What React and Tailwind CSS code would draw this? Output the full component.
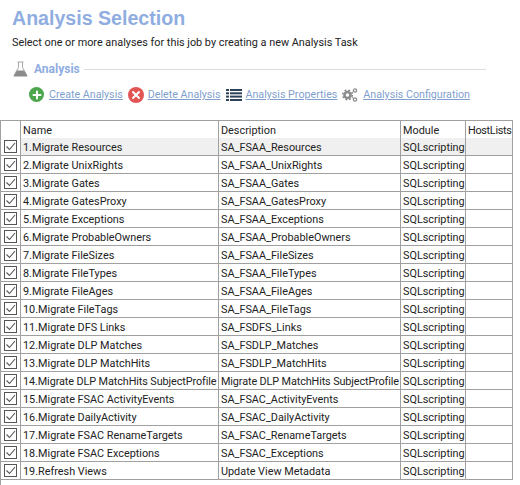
import { Plus, X } from "lucide-react";

const rows = [
  ["1.Migrate Resources", "SA_FSAA_Resources"],
  ["2.Migrate UnixRights", "SA_FSAA_UnixRights"],
  ["3.Migrate Gates", "SA_FSAA_Gates"],
  ["4.Migrate GatesProxy", "SA_FSAA_GatesProxy"],
  ["5.Migrate Exceptions", "SA_FSAA_Exceptions"],
  ["6.Migrate ProbableOwners", "SA_FSAA_ProbableOwners"],
  ["7.Migrate FileSizes", "SA_FSAA_FileSizes"],
  ["8.Migrate FileTypes", "SA_FSAA_FileTypes"],
  ["9.Migrate FileAges", "SA_FSAA_FileAges"],
  ["10.Migrate FileTags", "SA_FSAA_FileTags"],
  ["11.Migrate DFS Links", "SA_FSDFS_Links"],
  ["12.Migrate DLP Matches", "SA_FSDLP_Matches"],
  ["13.Migrate DLP MatchHits", "SA_FSDLP_MatchHits"],
  ["14.Migrate DLP MatchHits SubjectProfile", "Migrate DLP MatchHits SubjectProfile"],
  ["15.Migrate FSAC ActivityEvents", "SA_FSAC_ActivityEvents"],
  ["16.Migrate DailyActivity", "SA_FSAC_DailyActivity"],
  ["17.Migrate FSAC RenameTargets", "SA_FSAC_RenameTargets"],
  ["18.Migrate FSAC Exceptions", "SA_FSAC_Exceptions"],
  ["19.Refresh Views", "Update View Metadata"],
];

const cols = "grid grid-cols-[20px_198px_182px_65px_47px]";
const cell = "border-r border-[#a0a0a0] pl-[2px] pt-px h-full overflow-hidden whitespace-nowrap";

function Flask() {
  return (
    <svg width="15" height="16" viewBox="0 0 15 16">
      <path d="M4.5 1h6M5.5 1v5.5L1 14.5h13L9.5 6.5V1" fill="none" stroke="#a8a8a8" />
      <path d="M4 9.5h7l3.5 6H.5z" fill="#8c8c8c" />
    </svg>
  );
}

function Gears() {
  return (
    <svg width="16" height="16" viewBox="0 0 16 16" fill="none" stroke="#8c8c8c">
      <circle cx="5.5" cy="8" r="3" strokeWidth="2.6" />
      <circle cx="5.5" cy="8" r="4.8" strokeWidth="1.5" strokeDasharray="1.9 1.9" />
      <circle cx="13" cy="3.5" r="1.6" strokeWidth="1.3" />
      <circle cx="13" cy="12.5" r="1.6" strokeWidth="1.3" />
      <path d="M9.5 6 11.5 4.5M9.5 10 11.5 11.5" strokeWidth="1" />
    </svg>
  );
}

function ListIcon() {
  return (
    <svg width="16" height="12" viewBox="0 0 16 12" fill="#2f4159">
      <rect x="0" y="0" width="3" height="2" />
      <rect x="4" y="0" width="12" height="2" />
      <rect x="0" y="3.3" width="3" height="2" />
      <rect x="4" y="3.3" width="12" height="2" />
      <rect x="0" y="6.6" width="3" height="2" />
      <rect x="4" y="6.6" width="12" height="2" />
      <rect x="0" y="10" width="3" height="2" />
      <rect x="4" y="10" width="12" height="2" />
    </svg>
  );
}

function Check() {
  return (
    <div className="w-[13px] h-[13px] border border-[#555] bg-white flex items-center justify-center">
      <svg width="11" height="11" viewBox="0 0 11 11" fill="none" stroke="#555" strokeWidth="1.1">
        <path d="M1.5 5.5 4.5 8.5 10 2" />
      </svg>
    </div>
  );
}

function Action({ icon, label, className }) {
  return (
    <div className={"flex items-center gap-[4px] " + className}>
      {icon}
      <a className="underline text-[#7f9fce]">{label}</a>
    </div>
  );
}

export default function App() {
  return (
    <div className="w-[520px] h-[485px] bg-white overflow-hidden font-['Roboto',sans-serif] text-[10.85px] text-[#222]">
      <h1 className="pl-3 pt-[5px] h-[35px] font-['Liberation_Sans',sans-serif] text-[19.6px] leading-[26px] font-bold text-[#8fade0]">Analysis Selection</h1>
      <p className="pl-3 h-[24px] leading-[16px]">Select one or more analyses for this job by creating a new Analysis Task</p>

      <div className="flex items-center h-[20px] pl-[13px] pr-[34px]">
        <Flask />
        <span className="ml-[6px] text-[12px] font-bold text-[#8fade0]">Analysis</span>
        <div className="ml-1 flex-1 h-px bg-[#dcdcdc]" />
      </div>

      <div className="flex items-center h-[26px] mt-[3px] pl-[29px] text-[10.7px]">
        <Action
          className="gap-[5px]"
          label="Create Analysis"
          icon={<span className="w-[15px] h-[15px] rounded-full bg-[#4ca64c] flex items-center justify-center"><Plus size={12} strokeWidth={4} color="#fff" /></span>}
        />
        <Action
          className="ml-[5px]"
          label="Delete Analysis"
          icon={<span className="w-[16px] h-[16px] rounded-full bg-[#e25555] flex items-center justify-center"><X size={12} strokeWidth={4} color="#fff" /></span>}
        />
        <Action className="ml-[5px]" label="Analysis Properties" icon={<ListIcon />} />
        <Action className="ml-[5px] gap-[5px]" label="Analysis Configuration" icon={<Gears />} />
      </div>

      <div className="mt-[12px] w-[513px] h-[365px] border-t border-l border-[#a0a0a0]">
        <div className={cols + " h-[17px] leading-[17px] border-r border-[#a0a0a0]"}>
          <div className={cell} />
          <div className={cell}>Name</div>
          <div className={cell}>Description</div>
          <div className={cell}>Module</div>
          <div className="pl-[2px] pt-px tracking-[-0.3px]">HostLists</div>
        </div>
        {rows.map((r, i) => (
          <div key={i} className={cols + " h-[18px] leading-[18px] border-b border-r border-[#a0a0a0] " + (i === 0 ? "bg-[#f0f0f0]" : "bg-white")}>
            <div className={cell + " pl-[3px] !pt-0 flex items-center bg-white"}><Check /></div>
            <div className={cell + (i === 13 ? " tracking-[-0.1px]" : "")}>{r[0]}</div>
            <div className={cell + (i === 13 ? " tracking-[-0.12px]" : "")}>{r[1]}</div>
            <div className={cell}>SQLscripting</div>
            <div />
          </div>
        ))}
      </div>
    </div>
  );
}
